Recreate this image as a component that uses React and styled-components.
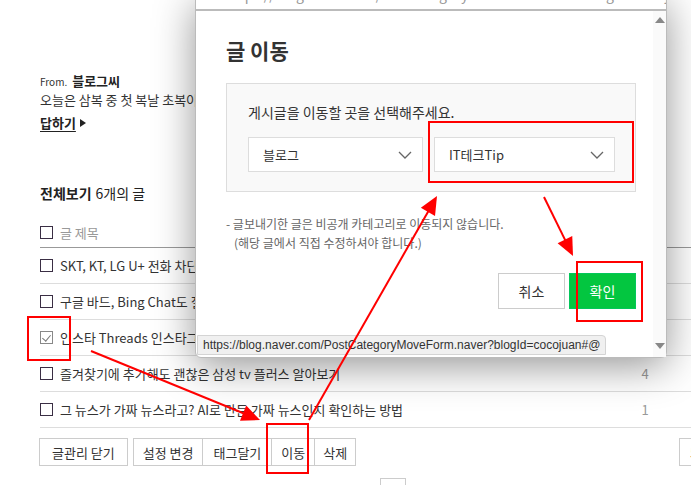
import React from "react";
import styled, { createGlobalStyle } from "styled-components";

const GlobalStyle = createGlobalStyle`
  html, body {
    margin: 0;
    padding: 0;
    background: #fff;
    font-family: "Noto Sans CJK KR", "Noto Sans", sans-serif;
    color: #333;
  }
  * { box-sizing: border-box; }
`;

const posts = [
  { title: "SKT, KT, LG U+ 전화 차단 서비스 비교하기", count: "" },
  { title: "구글 바드, Bing Chat도 질문에 답하는 AI", count: "" },
  { title: "인스타 Threads 인스타그램 스레드 사용법", count: "", checked: true },
  { title: "즐겨찾기에 추가해도 괜찮은 삼성 tv 플러스 알아보기", count: "4" },
  { title: "그 뉴스가 가짜 뉴스라고? AI로 만든 가짜 뉴스인지 확인하는 방법", count: "1" },
];

const Page = styled.div`
  position: relative;
  width: 691px;
  height: 485px;
  overflow: hidden;
`;

const Main = styled.div`
  padding: 71px 0 0 40px;
`;

const FromLine = styled.div`
  display: flex;
  align-items: baseline;
  gap: 5px;
  height: 18px;
  font-size: 13px;
  font-weight: 700;
  color: #222;
  small {
    font-size: 10px;
    font-weight: 400;
    color: #333;
  }
`;

const Body = styled.p`
  margin: 2px 0 0;
  font-size: 13px;
  line-height: 18px;
  white-space: nowrap;
  color: #333;
`;

const Reply = styled.a`
  display: inline-flex;
  align-items: center;
  gap: 4px;
  margin-top: 4px;
  font-size: 13px;
  font-weight: 700;
  color: #222;
  text-decoration: underline;
  text-underline-offset: 3px;
  &::after {
    content: "";
    border-left: 6px solid #222;
    border-top: 4px solid transparent;
    border-bottom: 4px solid transparent;
  }
`;

const ListTitle = styled.h3`
  margin: 50px 0 0;
  font-size: 14px;
  font-weight: 700;
  color: #222;
  span {
    font-weight: 400;
    margin-left: 4px;
  }
`;

const List = styled.div`
  margin-top: 15px;
`;

const Row = styled.div`
  display: flex;
  align-items: center;
  height: ${(p) => (p.$head ? "30px" : "36px")};
  border-bottom: 1px solid ${(p) => (p.$head ? "#999" : "#ddd")};
  font-size: 13px;
  color: ${(p) => (p.$head ? "#999" : "#333")};
  white-space: nowrap;
`;

const Box = styled.span`
  flex: none;
  position: relative;
  width: 13px;
  height: 13px;
  margin-right: 7px;
  border: 1px solid ${(p) => (p.$checked ? "#888" : "#3a2e44")};
  background: #fff;
  &::after {
    content: "";
    display: ${(p) => (p.$checked ? "block" : "none")};
    position: absolute;
    left: 3px;
    top: 1px;
    width: 4px;
    height: 7px;
    border-right: 1px solid #777;
    border-bottom: 1px solid #777;
    transform: rotate(40deg);
  }
`;

const Title = styled.span`
  flex: 1;
  overflow: hidden;
`;

const Count = styled.span`
  width: 52px;
  margin-right: 20px;
  text-align: center;
  color: #999;
`;

const Toolbar = styled.div`
  display: flex;
  align-items: center;
  margin-top: 10px;
`;

const Group = styled.div`
  display: flex;
  margin-left: ${(p) => p.$gap || 0}px;
`;

const Btn = styled.button`
  height: 28px;
  padding: 0 ${(p) => p.$pad || 10}px;
  border: 1px solid #ccc;
  margin-left: -1px;
  background: #fff;
  font-family: inherit;
  font-size: 13px;
  color: #333;
  white-space: nowrap;
  cursor: pointer;
`;

const Pager = styled.div`
  width: 26px;
  height: 14px;
  margin: 12px 0 0 340px;
  border: 1px solid #ccc;
  border-bottom: 0;
`;

/* popup window */
const Popup = styled.div`
  position: absolute;
  left: 195px;
  top: -4px;
  width: 472px;
  height: 362px;
  background: #fff;
  border: 1px solid #bbb;
  border-radius: 0 0 6px 6px;
  box-shadow: 0 8px 40px rgba(0, 0, 0, 0.42);
  display: flex;
  flex-direction: column;
`;

const AddressStrip = styled.div`
  height: 14px;
  overflow: hidden;
  border-bottom: 2px solid #bbb;
  padding-left: 30px;
  font-size: 14px;
  line-height: 14px;
  color: #999;
  white-space: nowrap;
  span {
    display: block;
    margin-top: -10px;
  }
`;

const Window = styled.div`
  flex: 1;
  display: flex;
  min-height: 0;
`;

const Content = styled.div`
  flex: 1;
  padding: 24px 0 0 30px;
`;

const Heading = styled.h2`
  margin: 0;
  height: 30px;
  font-size: 21px;
  line-height: 30px;
  font-weight: 700;
  color: #333;
`;

const Panel = styled.div`
  width: 410px;
  height: 109px;
  margin-top: 18px;
  padding: 18px 20px 0 21px;
  background: #f9f9f9;
  border: 1px solid #ddd;
`;

const Prompt = styled.p`
  margin: 0;
  font-size: 14px;
  line-height: 20px;
  color: #333;
`;

const Selects = styled.div`
  display: flex;
  gap: 11px;
  margin-top: 15px;
`;

const Select = styled.div`
  display: flex;
  align-items: center;
  justify-content: space-between;
  width: ${(p) => p.$w}px;
  height: 35px;
  padding: 0 10px 0 14px;
  background: #fff;
  border: 1px solid #ddd;
  font-size: 13px;
  color: #333;
  svg {
    flex: none;
  }
`;

const Notes = styled.div`
  margin-top: 22px;
  font-size: 12px;
  line-height: 19px;
  color: #666;
  p {
    margin: 0;
  }
  p + p {
    padding-left: 8px;
  }
`;

const Actions = styled.div`
  display: flex;
  justify-content: flex-end;
  gap: 4px;
  width: 410px;
  margin-top: 21px;
`;

const ActionBtn = styled.button`
  width: 67px;
  height: 36px;
  border: 1px solid ${(p) => (p.$primary ? "#03c75a" : "#ccc")};
  background: ${(p) => (p.$primary ? "#03c640" : "#fff")};
  color: ${(p) => (p.$primary ? "#fff" : "#333")};
  font-family: inherit;
  font-size: 14px;
  cursor: pointer;
`;

const Scroll = styled.div`
  width: 13px;
  display: flex;
  flex-direction: column;
  justify-content: space-between;
  align-items: center;
  padding: 6px 0 8px;
  background: #fafafa;
`;

const Arrow = styled.span`
  width: 0;
  height: 0;
  border-left: 5px solid transparent;
  border-right: 5px solid transparent;
  ${(p) => (p.$down ? "border-top" : "border-bottom")}: 6px solid #888;
`;

const Status = styled.div`
  position: absolute;
  left: 197px;
  top: 335px;
  width: 409px;
  height: 20px;
  padding-left: 5px;
  background: #f0f0f0;
  border: 1px solid #d4d4d4;
  border-radius: 0 4px 0 0;
  font-family: "Liberation Sans", "Noto Sans", sans-serif;
  font-size: 12px;
  line-height: 18px;
  color: #333;
  white-space: nowrap;
`;

const Marks = styled.svg`
  position: absolute;
  left: 0;
  top: 0;
  pointer-events: none;
`;

const Chevron = () => (
  <svg width="14" height="8" viewBox="0 0 14 8">
    <path d="M1 1l6 6 6-6" fill="none" stroke="#666" strokeWidth="1.3" />
  </svg>
);

const ArrowLine = ({ x1, y1, x2, y2 }) => {
  const a = Math.atan2(y2 - y1, x2 - x1);
  const len = 20;
  const w = 0.42;
  const p1 = [x2 - len * Math.cos(a - w), y2 - len * Math.sin(a - w)];
  const p2 = [x2 - len * Math.cos(a + w), y2 - len * Math.sin(a + w)];
  const bx = x2 - len * 0.8 * Math.cos(a);
  const by = y2 - len * 0.8 * Math.sin(a);
  return (
    <g>
      <line x1={x1} y1={y1} x2={bx} y2={by} stroke="#f00" strokeWidth="2" />
      <polygon points={`${x2},${y2} ${p1.join(",")} ${p2.join(",")}`} fill="#f00" />
    </g>
  );
};

export default function App() {
  return (
    <Page>
      <GlobalStyle />
      <Main>
        <FromLine>
          <small>From.</small>블로그씨
        </FromLine>
        <Body>오늘은 삼복 중 첫 복날 초복이에요. 여러분은 어떻게 보내시나요?</Body>
        <Reply href="#reply">답하기</Reply>

        <ListTitle>
          전체보기<span>6개의 글</span>
        </ListTitle>
        <List>
          <Row $head>
            <Box />
            <Title>글 제목</Title>
          </Row>
          {posts.map((p) => (
            <Row key={p.title}>
              <Box $checked={p.checked} />
              <Title>{p.title}</Title>
              <Count>{p.count}</Count>
            </Row>
          ))}
        </List>
        <Toolbar>
          <Group>
            <Btn $pad={12}>글관리 닫기</Btn>
          </Group>
          <Group $gap={6}>
            <Btn $pad={9}>설정 변경</Btn>
            <Btn $pad={10}>태그달기</Btn>
            <Btn $pad={9}>이동</Btn>
            <Btn $pad={8}>삭제</Btn>
          </Group>
          <Group $gap={324}>
            <Btn $pad={10}>5줄 보기</Btn>
          </Group>
        </Toolbar>
        <Pager />
      </Main>

      <Popup>
        <AddressStrip>
          <span>https://blog.naver.com/PostCategoryMoveForm.naver?blogId=cocojuan&amp;logNo=22311</span>
        </AddressStrip>
        <Window>
          <Content>
            <Heading>글 이동</Heading>
            <Panel>
              <Prompt>게시글을 이동할 곳을 선택해주세요.</Prompt>
              <Selects>
                <Select $w={176}>
                  블로그
                  <Chevron />
                </Select>
                <Select $w={182}>
                  IT테크Tip
                  <Chevron />
                </Select>
              </Selects>
            </Panel>
            <Notes>
              <p>- 글보내기한 글은 비공개 카테고리로 이동되지 않습니다.</p>
              <p>(해당 글에서 직접 수정하셔야 합니다.)</p>
            </Notes>
            <Actions>
              <ActionBtn>취소</ActionBtn>
              <ActionBtn $primary>확인</ActionBtn>
            </Actions>
          </Content>
          <Scroll>
            <Arrow />
            <Arrow $down />
          </Scroll>
        </Window>
      </Popup>

      <Status>https://blog.naver.com/PostCategoryMoveForm.naver?blogId=cocojuan#@</Status>

      <Marks width="691" height="485">
        <g fill="none" stroke="#f00" strokeWidth="2">
          <rect x="429" y="122" width="204" height="60" />
          <rect x="577" y="262" width="65" height="59" />
          <rect x="28" y="317" width="42" height="43" />
          <rect x="267" y="424" width="41" height="49" />
        </g>
        <ArrowLine x1={544} y1={197} x2={573} y2={256} />
        <ArrowLine x1={309} y1={420} x2={437} y2={196} />
        <ArrowLine x1={91} y1={351} x2={260} y2={420} />
      </Marks>
    </Page>
  );
}
